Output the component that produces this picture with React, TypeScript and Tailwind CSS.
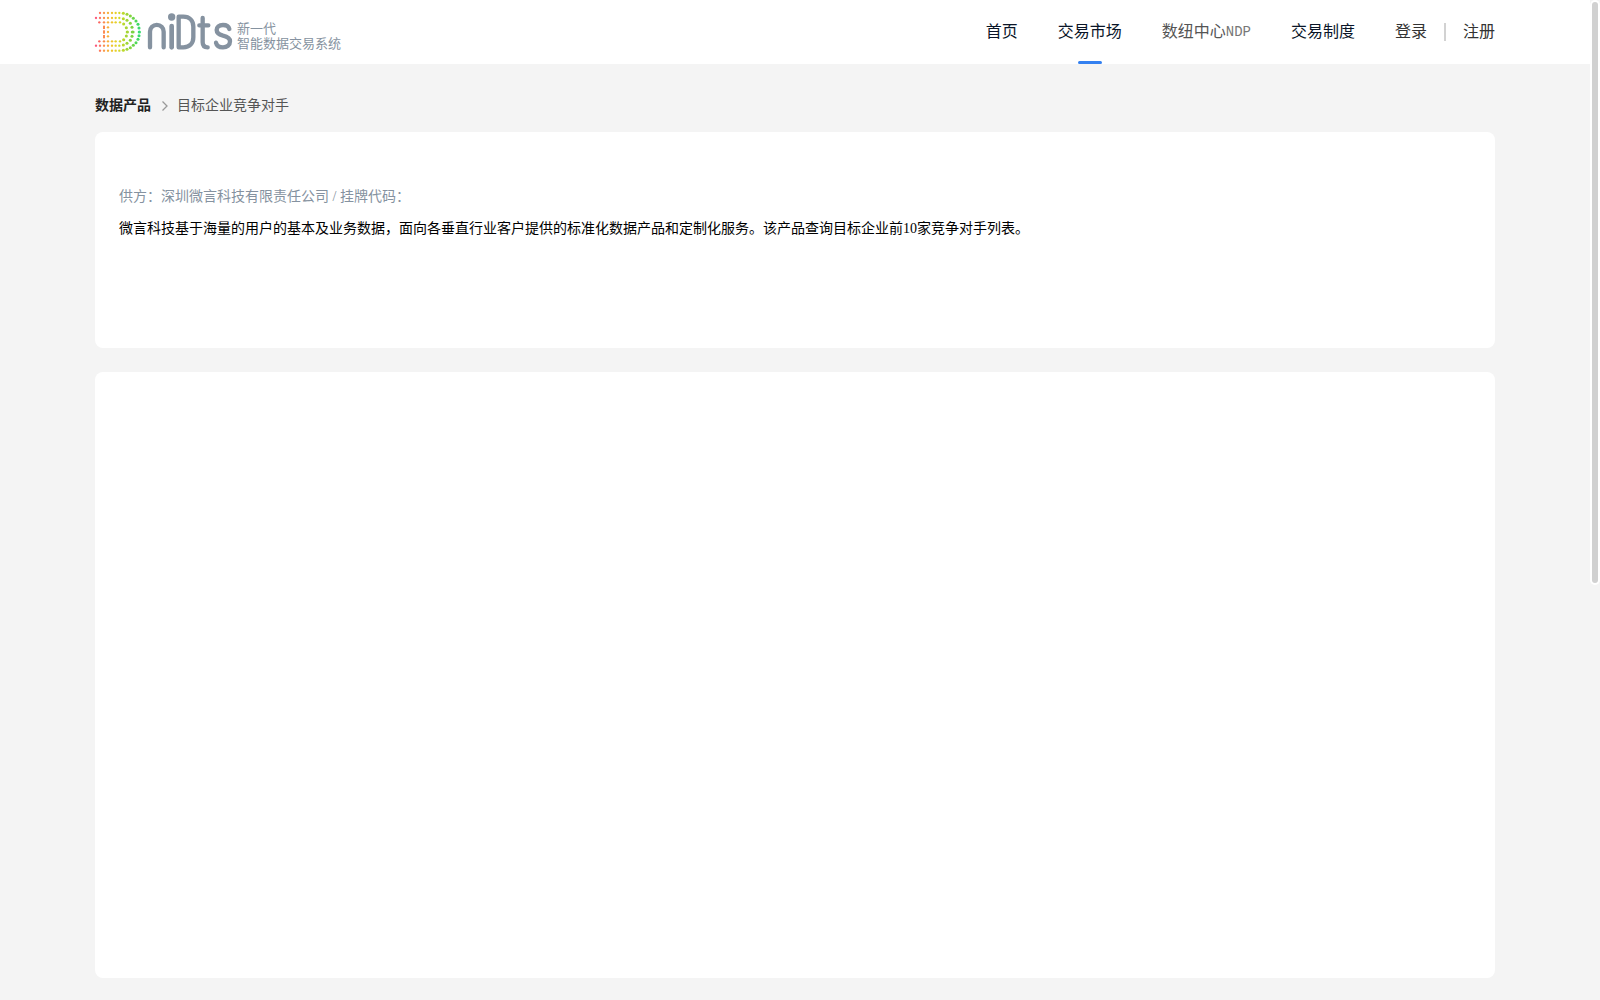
type Dot = [number, number, string];

const upperDots: Dot[] = [
  [24, 15, '#ff7a5c'], [36, 15, '#f99a4a'], [48, 15, '#f8b13a'], [60, 15, '#f0c42e'],
  [71, 15, '#e6d028'], [82, 15, '#d4d828'], [94, 16, '#bcd92c'], [105, 19, '#9fd636'],
  [115, 24, '#84d43e'], [124, 31, '#69d64a'], [132, 39, '#50d856'], [138, 49, '#3fda62'],
  [141, 60, '#3adb6c'],
  [12, 30, '#fb5a7c'], [24, 30, '#fc7565'], [36, 30, '#fa9150'], [48, 30, '#f8ad3c'],
  [60, 30, '#f0c42e'], [71, 30, '#e6d028'], [82, 30, '#d2d828'], [94, 32, '#b9d82c'],
  [105, 37, '#9fd636'], [115, 46, '#86d43e'], [120, 58, '#7bd242'],
  [22, 43, '#fb6560'], [36, 43, '#f98a4c'], [48, 43, '#f8b13a'], [60, 43, '#f0c42e'],
  [71, 43, '#e6d028'], [84, 43, '#d2d828'], [95, 48, '#b9d82c'], [103, 59, '#a5d634'],
];

const AXIS = 71.5;

function LogoMark() {
  return (
    <svg viewBox="0 0 156 144" className="h-12 w-[52px] shrink-0" aria-hidden="true">
      {upperDots.map(([x, y, fill]) => (
        <g key={`${x}-${y}`} fill={fill}>
          <circle cx={x} cy={y} r={x > 93 ? 4.6 : 3.5} />
          <circle cx={x} cy={2 * AXIS - y} r={x > 93 ? 4.6 : 3.5} />
        </g>
      ))}
      <ellipse cx="142" cy="72" rx="5" ry="4.6" fill="#38dc70" />
      <ellipse cx="122" cy="72" rx="6" ry="4.6" fill="#7bd242" />
      <ellipse cx="106" cy="72" rx="5" ry="4.6" fill="#a5d634" />
      <g fill="#fb8b52">
        <rect x="33" y="53" width="6" height="10" />
        <rect x="33" y="67" width="6" height="10" />
        <rect x="33" y="81" width="6" height="10" />
      </g>
      <g fill="#f8b13a">
        <circle cx="48" cy="58" r="3.5" />
        <circle cx="48" cy="72" r="3.5" />
        <circle cx="48" cy="85" r="3.5" />
      </g>
    </svg>
  );
}

function LogoWordmark() {
  return (
    <svg
      viewBox="0 0 276 144"
      className="h-12 w-[92px] shrink-0"
      fill="none"
      stroke="#8592a0"
      strokeWidth="13"
      strokeLinecap="round"
      role="img"
      aria-label="niDts"
    >
      <path d="M18 118V71a20 20 0 0 1 41 0v47" />
      <path d="M83 54v64" strokeWidth="14" />
      <circle cx="83" cy="27" r="11" fill="#8592a0" stroke="none" />
      <path d="M104 26h14c19 0 30 12 30 30v32c0 18-11 30-30 30h-14Z" strokeLinejoin="round" />
      <path d="M176 30v73c0 10 5 15 15 15M166 52h27" />
      <path d="M256 63c-2-8-9-12-19-12-12 0-19 6-19 15 0 11 8 14 19 17 14 3 21 7 21 17 0 12-9 18-21 18-11 0-19-5-21-14" />
    </svg>
  );
}

const navItems = [
  { label: '首页', color: 'text-[#0a1528]' },
  { label: '交易市场', color: 'text-[#0a1528]', active: true },
  { label: '数纽中心', latin: 'NDP', color: 'text-[#555555]' },
  { label: '交易制度', color: 'text-[#0a1528]' },
];

function Header() {
  return (
    <header className="h-16 bg-white">
      <div className="mx-auto flex h-full max-w-[1400px] items-center justify-between">
        <a href="#" className="-ml-[3px] flex items-center text-[#8592a0]">
          <LogoMark />
          <LogoWordmark />
          <span className="ml-px mt-1.5 flex flex-col font-['Noto_Sans_CJK_SC',sans-serif] text-[13px] leading-[15px] whitespace-nowrap">
            <span>新一代</span>
            <span>智能数据交易系统</span>
          </span>
        </a>
        <div className="flex h-full items-center gap-10 whitespace-nowrap">
          <nav className="flex h-full gap-10">
            {navItems.map((item) => (
              <a key={item.label} href="#" className={`relative flex h-full items-center ${item.color}`}>
                {item.label}
                {item.latin && (
                  <span className="font-['Liberation_Mono',monospace] text-sm text-[#777777]">{item.latin}</span>
                )}
                {item.active && (
                  <span className="absolute bottom-0 left-1/2 h-[3px] w-6 -translate-x-1/2 rounded-sm bg-[#3380f0]" />
                )}
              </a>
            ))}
          </nav>
          <div className="flex items-center text-[#333333]">
            <a href="#">登录</a>
            <span className="mx-[17px] h-[18px] w-0.5 bg-[#d2d2d2]" />
            <a href="#">注册</a>
          </div>
        </div>
      </div>
    </header>
  );
}

export default function App() {
  return (
    <div className="relative min-h-screen bg-[#f4f4f4] pr-2.5 font-['Liberation_Serif','Noto_Sans_CJK_SC',serif] text-base">
      <Header />
      <main className="mx-auto max-w-[1400px] pb-[22px]">
        <nav aria-label="breadcrumb" className="flex h-[68px] items-center pt-4 text-sm">
          <a href="#" className="font-bold text-[#222222]">
            数据产品
          </a>
          <svg viewBox="0 0 8 12" className="mr-2 ml-2.5 h-3 w-2" fill="none" stroke="#999999" strokeWidth="1.3" aria-hidden="true">
            <path d="M1.5 1.5 6 6l-4.5 4.5" />
          </svg>
          <span className="text-[#555555]">目标企业竞争对手</span>
        </nav>
        <section className="min-h-[216px] rounded-lg bg-white px-6 pt-[55px] text-sm">
          <p className="leading-5 text-[#8592a0]">供方：深圳微言科技有限责任公司 / 挂牌代码：</p>
          <p className="mt-3 leading-5 text-black">
            微言科技基于海量的用户的基本及业务数据，面向各垂直行业客户提供的标准化数据产品和定制化服务。该产品查询目标企业前10家竞争对手列表。
          </p>
        </section>
        <section className="mt-6 min-h-[606px] rounded-lg bg-white" />
      </main>
      <div className="absolute top-0 right-0 h-[585px] w-2.5 rounded-full bg-white p-0.5" aria-hidden="true">
        <div className="h-full rounded-full bg-[#d1d1d1]" />
      </div>
    </div>
  );
}
